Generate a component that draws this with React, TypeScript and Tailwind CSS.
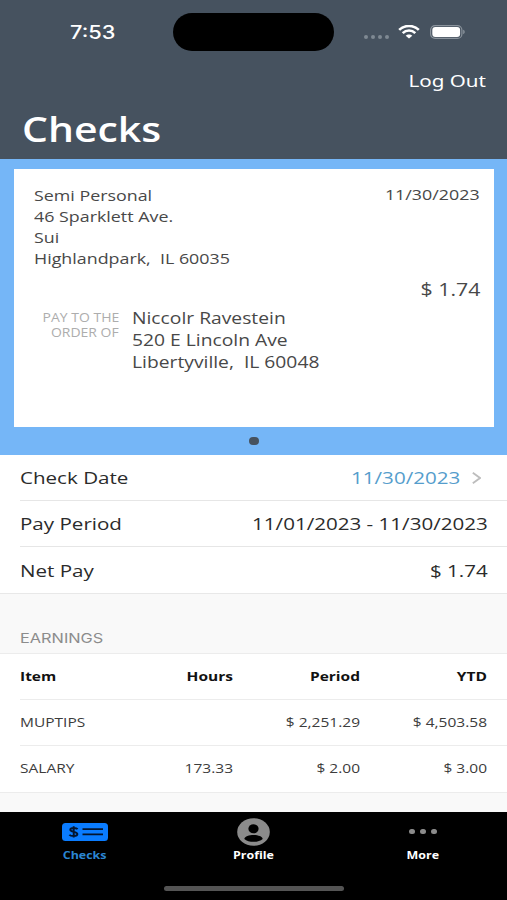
import React from "react";
import clsx from "clsx";

interface Earning {
  item: string;
  hours: string;
  period: string;
  ytd: string;
}

const earnings: Earning[] = [
  { item: "MUPTIPS", hours: "", period: "$ 2,251.29", ytd: "$ 4,503.58" },
  { item: "SALARY", hours: "173.33", period: "$ 2.00", ytd: "$ 3.00" },
];

interface WideProps {
  children: React.ReactNode;
  align?: "left" | "right" | "center";
  narrow?: boolean;
  className?: string;
}

const Wide: React.FC<WideProps> = ({ children, align = "left", narrow, className }) => (
  <span
    className={clsx(
      "inline-block whitespace-pre",
      narrow ? "scale-x-[1.175]" : "scale-x-[1.21]",
      align === "left" && "origin-left",
      align === "right" && "origin-right text-right",
      align === "center" && "origin-center",
      className
    )}
  >
    {children}
  </span>
);

const StatusBar: React.FC = () => (
  <div className="grid h-[52px] grid-cols-[173px_161px_1fr] pt-[13px] text-white">
    <div className="flex h-[38px] items-center pl-[70px]">
      <Wide className="font-['Inter',sans-serif] text-[18px] font-medium">7:53</Wide>
    </div>
    <div className="h-[38px] rounded-full bg-black" />
    <div className="flex h-[38px] items-center pl-[30px]">
      <div className="mt-[9px] flex gap-[3px]">
        {[0, 1, 2, 3].map((i) => (
          <span key={i} className="h-[4px] w-[4px] rounded-full bg-[#7f8993]" />
        ))}
      </div>
      <svg className="ml-[9px] h-[14px] w-[22px]" viewBox="0 0 22 14" fill="none" stroke="white" strokeWidth="2.6">
        <path d="M1.2 4.9C6.4-.3 15.6-.3 20.8 4.9" />
        <path d="M4.7 8.1C8.2 4.7 13.8 4.7 17.3 8.1" />
        <path d="M11 13.6L7.7 10.8C9.4 9.2 12.6 9.2 14.3 10.8Z" fill="white" stroke="none" />
      </svg>
      <svg className="ml-[10px] h-[14px] w-[36px]" viewBox="0 0 36 14">
        <rect x=".6" y=".6" width="31.3" height="12.8" rx="4.5" fill="none" stroke="#8a939c" strokeWidth="1.2" />
        <rect x="2.3" y="2" width="27.8" height="10" rx="3" fill="white" />
        <path d="M33.2 4.8C35.2 5.4 35.2 8.6 33.2 9.2Z" fill="#8a939c" />
      </svg>
    </div>
  </div>
);

const CheckCard: React.FC = () => (
  <div className="h-[295.5px] bg-[#75b6f7] px-[13.5px] pt-[10px]">
    <div className="h-[258px] bg-white pl-[20.5px] pr-[13.5px] text-[#484848]">
      <div className="flex h-[104px] justify-between pt-[16px] text-[15.2px] leading-[21px]">
        <div className="flex flex-col items-start">
          <Wide narrow>Semi Personal</Wide>
          <Wide narrow>46 Sparklett Ave.</Wide>
          <Wide narrow>Sui</Wide>
          <Wide narrow>{"Highlandpark,  IL 60035"}</Wide>
        </div>
        <div className="-mt-px">
          <Wide narrow align="right">11/30/2023</Wide>
        </div>
      </div>
      <div className="flex h-[32px] items-center justify-end text-[17.6px]">
        <Wide align="right">$ 1.74</Wide>
      </div>
      <div className="flex pt-[2px] text-[16.4px] leading-[22px]">
        <div className="flex w-[85px] flex-col items-end pt-[2.5px] text-[11.9px] leading-[15.5px] text-[#adadad]">
          <Wide narrow align="right">PAY TO THE</Wide>
          <Wide narrow align="right">ORDER OF</Wide>
        </div>
        <div className="ml-[13px] flex flex-col items-start">
          <Wide narrow>Niccolr Ravestein</Wide>
          <Wide narrow>520 E Lincoln Ave</Wide>
          <Wide narrow>{"Libertyville,  IL 60048"}</Wide>
        </div>
      </div>
    </div>
    <div className="mx-auto mt-[9.5px] h-[8px] w-[10px] rounded-full bg-[#46525f]" />
  </div>
);

interface RowProps {
  label: string;
  value: string;
  link?: boolean;
  last?: boolean;
}

const Row: React.FC<RowProps> = ({ label, value, link, last }) => (
  <div
    className={clsx(
      "ml-[20px] flex h-[46.4px] items-center justify-between pr-[19.5px] text-[17px] text-[#2b2b2b]",
      link && "pt-px",
      !last && "border-b border-[#e6e6e6]"
    )}
  >
    <Wide>{label}</Wide>
    <div className="flex items-center">
      <Wide align="right" className={clsx(link && "text-[#559dcc]")}>
        {value}
      </Wide>
      {link && (
        <svg className="ml-[11px] mr-[7px] h-[12px] w-[9px]" viewBox="0 0 9 12" fill="none" stroke="#bdbdbd" strokeWidth="1.8">
          <path d="M.8.8L8 6L.8 11.2" />
        </svg>
      )}
    </div>
  </div>
);

const columns = "grid grid-cols-[86px_127px_127px_127px] items-center";

const EarningsTable: React.FC = () => (
  <div className="h-[140px] border-y border-[#ececec] bg-white pl-[20px] text-[13.2px] text-[#3c3c3c]">
    <div className={clsx(columns, "h-[45px] font-bold text-[#111111]")}>
      <Wide narrow>Item</Wide>
      <Wide narrow align="right">Hours</Wide>
      <Wide narrow align="right">Period</Wide>
      <Wide narrow align="right">YTD</Wide>
    </div>
    {earnings.map((row) => (
      <div key={row.item} className={clsx(columns, "h-[46.4px] border-t border-[#ececec]")}>
        <Wide narrow>{row.item}</Wide>
        <Wide narrow align="right">{row.hours}</Wide>
        <Wide narrow align="right">{row.period}</Wide>
        <Wide narrow align="right">{row.ytd}</Wide>
      </div>
    ))}
  </div>
);

const TabBar: React.FC = () => (
  <div className="h-[88px] bg-black">
    <div className="grid h-[72px] grid-cols-3 pt-[5px] text-[10.6px] font-bold leading-[15px] text-white">
      <div className="flex flex-col items-center gap-[2px] text-[#2b86d2]">
        <div className="flex h-[29px] items-center">
          <svg className="h-[18px] w-[46px]" viewBox="0 0 46 18">
            <rect width="46" height="18" rx="3.5" fill="#0a7cff" />
            <path
              d="M15.6 6.1C14.6 4.7 8.3 4.2 8.3 6.8C8.3 9.4 15.4 8.2 15.4 11.1C15.4 13.8 8.6 13.4 7.4 11.7M11.7 3.2V14.6"
              fill="none"
              stroke="#04152e"
              strokeWidth="1.9"
            />
            <path d="M20.5 6.2H41M20.5 11.4H41" stroke="#04152e" strokeWidth="1.8" />
          </svg>
        </div>
        <Wide narrow align="center">Checks</Wide>
      </div>
      <div className="flex flex-col items-center gap-[2px]">
        <div className="flex h-[29px] items-center">
          <svg className="h-[28px] w-[33px]" viewBox="0 0 33 28">
            <ellipse cx="16.5" cy="14" rx="16.3" ry="13.8" fill="#8b8b8b" />
            <ellipse cx="16.5" cy="10.7" rx="5.1" ry="4.5" fill="black" />
            <path d="M7.3 20.9C8.2 15.6 24.8 15.6 25.7 20.9C21.5 24.8 11.5 24.8 7.3 20.9Z" fill="black" />
          </svg>
        </div>
        <Wide narrow align="center">Profile</Wide>
      </div>
      <div className="flex flex-col items-center gap-[2px]">
        <div className="flex h-[29px] items-center gap-[5px]">
          {[0, 1, 2].map((i) => (
            <span key={i} className="h-[5px] w-[6px] rounded-full bg-[#8b8b8b]" />
          ))}
        </div>
        <Wide narrow align="center">More</Wide>
      </div>
    </div>
    <div className="mx-auto mt-[2px] h-[5px] w-[180px] rounded-full bg-[#545454]" />
  </div>
);

const App: React.FC = () => {
  return (
    <div className="h-[900px] w-[507px] overflow-hidden bg-[#f9f9f9] font-['Open_Sans',sans-serif]">
      <header className="h-[159px] bg-[#46525f] text-white">
        <StatusBar />
        <div className="flex h-[57px] items-center justify-end pr-[21px]">
          <Wide align="right" className="font-['Noto_Sans',sans-serif] text-[17px]">Log Out</Wide>
        </div>
        <h1 className="flex h-[40px] items-center pl-[22px]">
          <Wide className="text-[33.8px] font-semibold leading-[40px]">Checks</Wide>
        </h1>
      </header>
      <CheckCard />
      <div className="h-[139px] border-b border-[#e8e8e8] bg-white">
        <Row label="Check Date" value="11/30/2023" link />
        <Row label="Pay Period" value="11/01/2023 - 11/30/2023" />
        <Row label="Net Pay" value="$ 1.74" last />
      </div>
      <div className="flex h-[59.5px] items-end pb-[6px] pl-[20px]">
        <Wide className="font-['Inter',sans-serif] text-[13.5px] leading-[18px] text-[#8c8c8c]">EARNINGS</Wide>
      </div>
      <EarningsTable />
      <div className="h-[19px]" />
      <TabBar />
    </div>
  );
};

export default App;
